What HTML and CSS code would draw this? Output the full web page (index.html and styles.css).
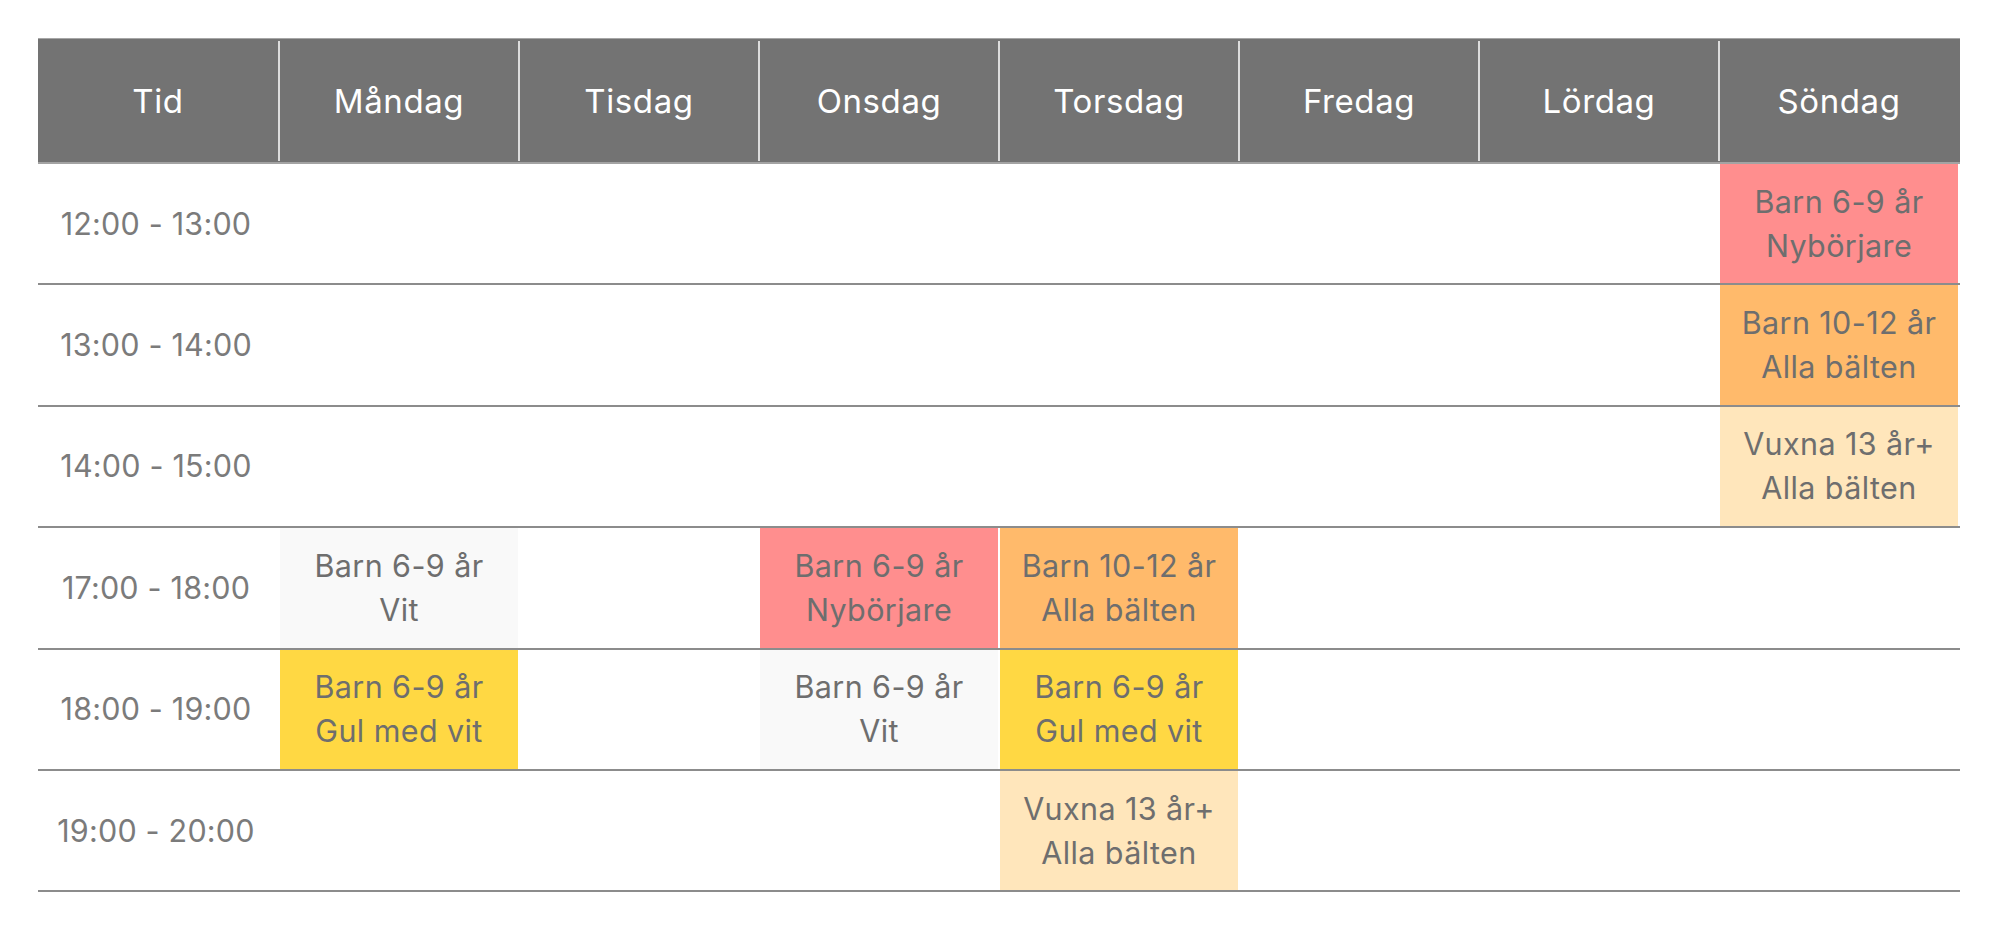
FILE: index.html
```html
<!DOCTYPE html>
<html lang="sv">
<head>
<meta charset="utf-8">
<title>Schema</title>
<link rel="stylesheet" href="styles.css">
</head>
<body>
<div class="schedule">
  <div class="head">
    <div class="hcell">Tid</div>
    <div class="hcell">Måndag</div>
    <div class="hcell">Tisdag</div>
    <div class="hcell">Onsdag</div>
    <div class="hcell">Torsdag</div>
    <div class="hcell">Fredag</div>
    <div class="hcell">Lördag</div>
    <div class="hcell">Söndag</div>
  </div>

  <div class="row">
    <div class="cell time">12:00 - 13:00</div>
    <div class="cell"></div><div class="cell"></div><div class="cell"></div>
    <div class="cell"></div><div class="cell"></div><div class="cell"></div>
    <div class="cell cls red">Barn 6-9 år<br>Nybörjare</div>
  </div>

  <div class="row">
    <div class="cell time">13:00 - 14:00</div>
    <div class="cell"></div><div class="cell"></div><div class="cell"></div>
    <div class="cell"></div><div class="cell"></div><div class="cell"></div>
    <div class="cell cls orange">Barn 10-12 år<br>Alla bälten</div>
  </div>

  <div class="row">
    <div class="cell time">14:00 - 15:00</div>
    <div class="cell"></div><div class="cell"></div><div class="cell"></div>
    <div class="cell"></div><div class="cell"></div><div class="cell"></div>
    <div class="cell cls cream">Vuxna 13 år+<br>Alla bälten</div>
  </div>

  <div class="row">
    <div class="cell time">17:00 - 18:00</div>
    <div class="cell cls grey">Barn 6-9 år<br>Vit</div>
    <div class="cell"></div>
    <div class="cell cls red">Barn 6-9 år<br>Nybörjare</div>
    <div class="cell cls orange">Barn 10-12 år<br>Alla bälten</div>
    <div class="cell"></div><div class="cell"></div><div class="cell"></div>
  </div>

  <div class="row">
    <div class="cell time">18:00 - 19:00</div>
    <div class="cell cls yellow">Barn 6-9 år<br>Gul med vit</div>
    <div class="cell"></div>
    <div class="cell cls grey">Barn 6-9 år<br>Vit</div>
    <div class="cell cls yellow">Barn 6-9 år<br>Gul med vit</div>
    <div class="cell"></div><div class="cell"></div><div class="cell"></div>
  </div>

  <div class="row">
    <div class="cell time">19:00 - 20:00</div>
    <div class="cell"></div><div class="cell"></div><div class="cell"></div>
    <div class="cell cls cream">Vuxna 13 år+<br>Alla bälten</div>
    <div class="cell"></div><div class="cell"></div><div class="cell"></div>
  </div>
</div>
</body>
</html>
```

FILE: styles.css
```css
html, body {
  margin: 0;
  padding: 0;
  background: #ffffff;
}

body {
  font-family: "Inter", "Noto Sans", sans-serif;
  padding: 38px 0 0 38px;
}

.schedule {
  width: 1922px;
}

.head {
  display: grid;
  grid-template-columns: repeat(8, 240px);
  background: #737373;
  border-top: 1px solid #a6a6a6;
  border-bottom: 2px solid #a3a3a3;
  box-sizing: border-box;
  height: 126px;
}

.hcell {
  display: flex;
  align-items: center;
  justify-content: center;
  color: #ffffff;
  font-size: 33px;
  letter-spacing: 0.6px;
  font-weight: 400;
  margin: 2px 0 1px;
}

.hcell + .hcell {
  border-left: 2px solid #dcdcdc;
}

.row {
  display: grid;
  grid-template-columns: repeat(8, 240px);
  height: 121.4px;
  border-bottom: 2px solid #8c8c8c;
  box-sizing: border-box;
}

.cell {
  display: flex;
  align-items: center;
  justify-content: center;
  text-align: center;
  font-size: 30.5px;
  letter-spacing: 0.4px;
  line-height: 44px;
  color: #6e6e6e;
}

.time {
  color: #7b7b7b;
  font-size: 30.5px;
  letter-spacing: 0.2px;
  padding-right: 4px;
}

.cls {
  margin-left: 2px;
}

.red { background: #ff8e8e; }
.orange { background: #ffba6b; }
.cream { background: #ffe6bb; }
.yellow { background: #ffd843; }
.grey { background: #f9f9f9; }
```
